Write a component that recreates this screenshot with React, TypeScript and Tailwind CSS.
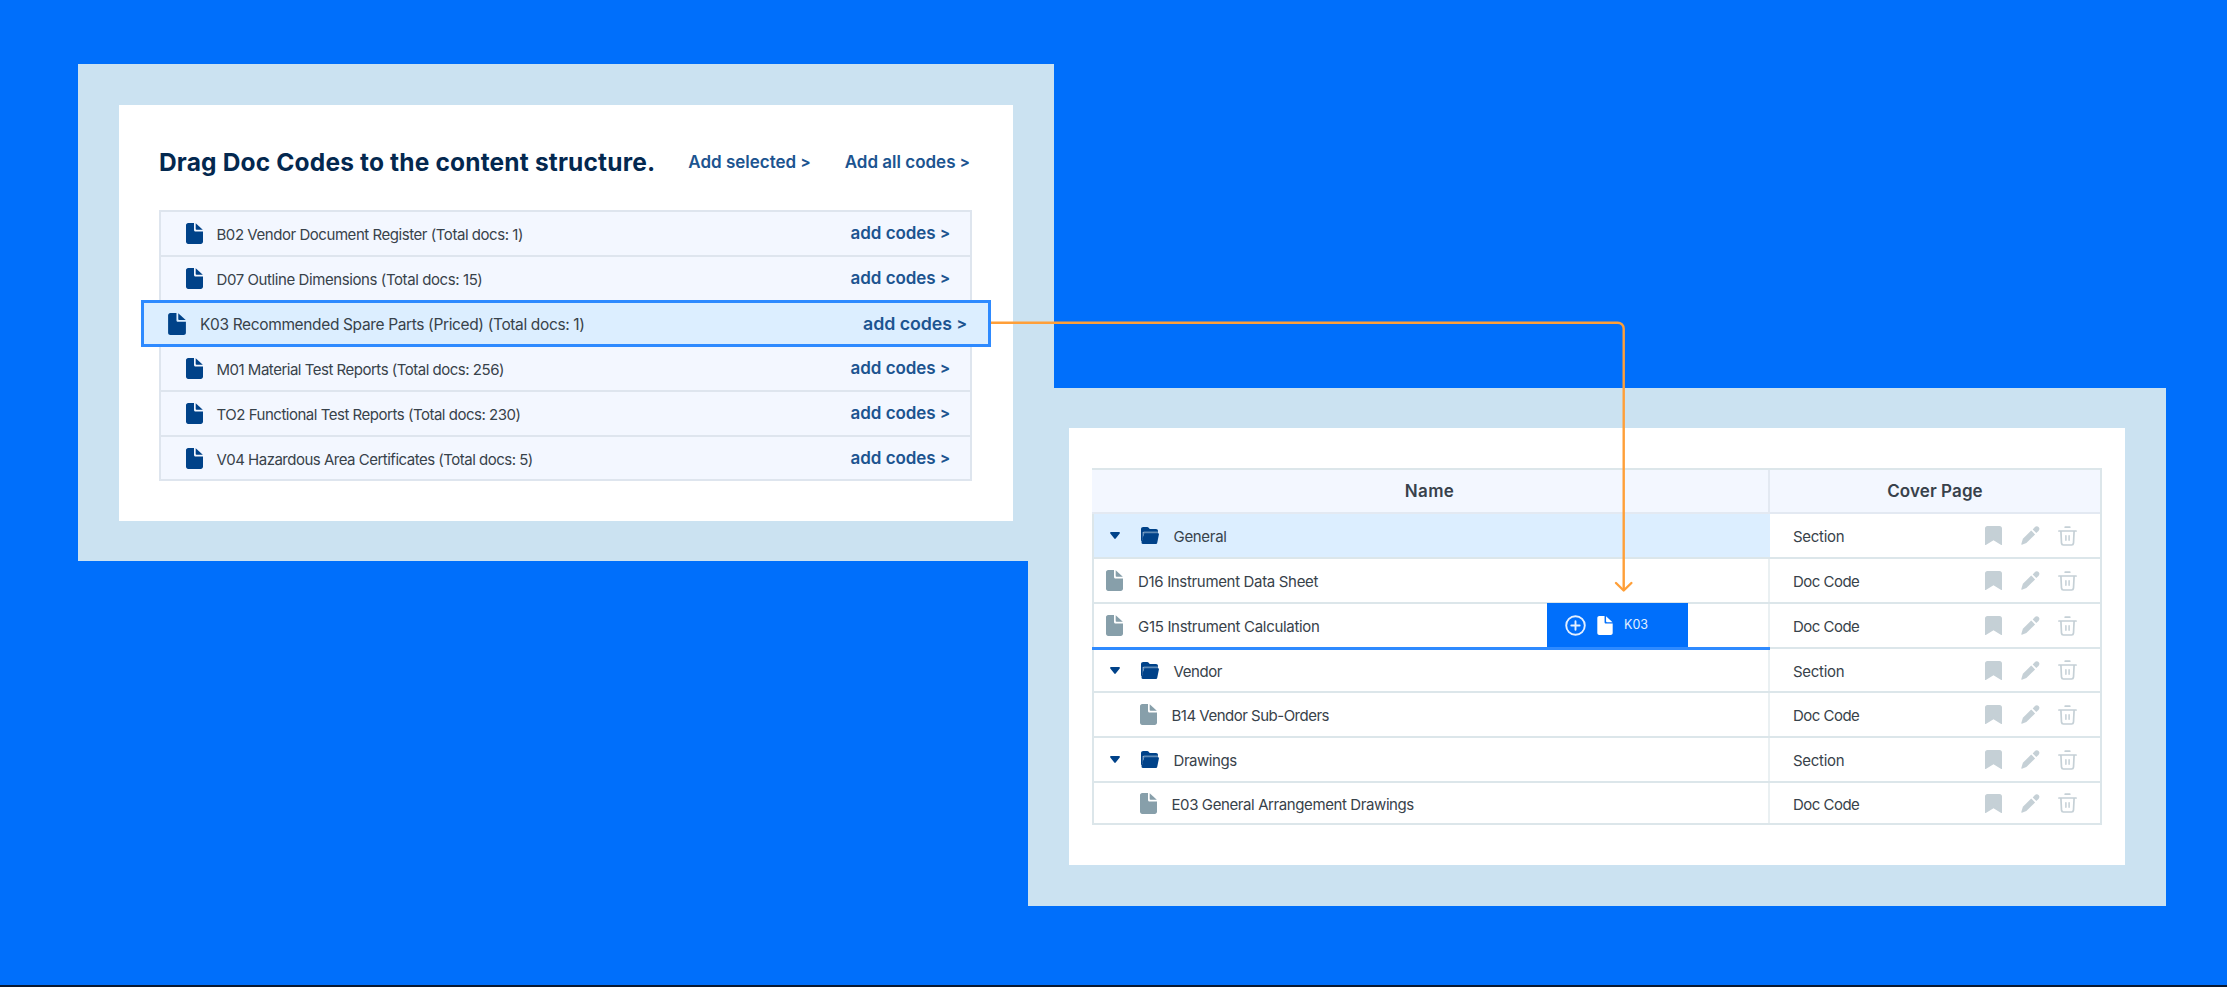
type IconProps = { className?: string };

const FileIcon = ({ className }: IconProps) => (
  <svg viewBox="0 0 17 21" fill="currentColor" className={className}>
    <path d="M2.2 0H8v6.9c0 .9.6 1.5 1.5 1.5H17v10.4c0 1.2-1 2.2-2.2 2.2H2.2C1 21 0 20 0 18.8V2.2C0 1 1 0 2.2 0Z" />
    <path d="M9.7 0.2 16.8 6.8H10.7c-.6 0-1-.4-1-1Z" />
  </svg>
);

const FolderIcon = ({ className }: IconProps) => (
  <svg viewBox="0 0 18 17" className={className}>
    <path fill="#004289" d="M0 2.2C0 .9.9 0 2.2 0h3.9c.7 0 1.2.3 1.6.8l1 1.3H15c1.2 0 2 .8 2 2v1H0Z" />
    <path fill="#5f8ab5" d="M2.6 4.6H17v3H1.8Z" />
    <path fill="#004289" d="M0 3.5h1.8V12L0 15Z" />
    <path fill="#004289" d="M4.2 6.2h12.6c.9 0 1.3.6 1.1 1.4l-1.6 7.8c-.2 1-.8 1.5-1.7 1.5H1.8C.8 16.9.3 16.1.6 15.2L2.7 7.3c.2-.7.7-1.1 1.5-1.1Z" />
  </svg>
);

const BookmarkIcon = ({ className }: IconProps) => (
  <svg viewBox="0 0 17 19" fill="currentColor" className={className}>
    <path d="M2.5 0h12C16 0 17 1 17 2.4V18.4c0 .5-.4.7-.8.5L8.5 14.2.8 18.9c-.4.2-.8 0-.8-.5V2.4C0 1 1 0 2.5 0Z" />
  </svg>
);

const PencilIcon = ({ className }: IconProps) => (
  <svg viewBox="0 0 19 19" fill="currentColor" className={className}>
    <path d="M10.2 4.5 14.1 8.4 5.4 17.1 0.9 18.7C.5 18.8.2 18.5.3 18.1L1.9 12.8Z" />
    <path d="M11.7 3.4 13.7 1.2c1.2-1.3 2.8-1.3 3.9-.2 1.1 1.1 1.1 2.7-.1 3.9L15.3 6.9Z" />
  </svg>
);

const TrashIcon = ({ className }: IconProps) => (
  <svg viewBox="0 0 19 20" fill="none" stroke="currentColor" strokeWidth="1.7" strokeLinecap="round" className={className}>
    <path d="M.9 5h17.2M7.2 1.2h4.6M2.9 5l.6 12.2c.1 1.1.8 1.8 1.9 1.8h8.2c1.1 0 1.8-.7 1.9-1.8L16.1 5" />
    <path strokeWidth="1.5" d="M7.9 9.8v4.4M11.1 9.8v4.4" />
  </svg>
);

const PlusCircleIcon = ({ className }: IconProps) => (
  <svg viewBox="0 0 21 21" fill="none" stroke="currentColor" strokeWidth="1.9" strokeLinecap="round" className={className}>
    <circle cx="10.5" cy="10.5" r="9.3" />
    <path d="M10.5 6.3v8.4M6.3 10.5h8.4" />
  </svg>
);

function ActionLink({ label, className = "" }: { label: string; className?: string }) {
  return (
    <span className={`font-semibold text-[#1c5490] ${className}`}>
      {label} <span className="align-[1px] text-[0.88em] font-bold">&gt;</span>
    </span>
  );
}

const docCodes = [
  { label: "B02 Vendor Document Register (Total docs: 1)", size: "h-[45px] tracking-[-0.45px]" },
  { label: "D07 Outline Dimensions (Total docs: 15)", size: "h-[45px] tracking-[-0.41px]" },
  { label: "K03 Recommended Spare Parts (Priced) (Total docs: 1)", size: "h-[47px] tracking-[-0.36px]", dragging: true },
  { label: "M01 Material Test Reports (Total docs: 256)", size: "h-[45px] tracking-[-0.49px]" },
  { label: "TO2 Functional Test Reports (Total docs: 230)", size: "h-[45px] tracking-[-0.48px]" },
  { label: "V04 Hazardous Area Certificates (Total docs: 5)", size: "h-[42px] tracking-[-0.5px]" },
];

const structure = [
  { name: "General", type: "Section", kind: "folder", size: "h-[45px]", tracking: "tracking-[-0.31px]", active: true },
  { name: "D16 Instrument Data Sheet", type: "Doc Code", kind: "file", size: "h-[45px]", tracking: "tracking-[-0.33px]" },
  { name: "G15 Instrument Calculation", type: "Doc Code", kind: "file", size: "h-[45px]", tracking: "tracking-[-0.31px]", dropTarget: true },
  { name: "Vendor", type: "Section", kind: "folder", size: "h-[44px]", tracking: "tracking-[-0.42px]" },
  { name: "B14 Vendor Sub-Orders", type: "Doc Code", kind: "nested", size: "h-[45px]", tracking: "tracking-[-0.5px]" },
  { name: "Drawings", type: "Section", kind: "folder", size: "h-[45px]", tracking: "tracking-[-0.45px]" },
  { name: "E03 General Arrangement Drawings", type: "Doc Code", kind: "nested", size: "h-[40px]", tracking: "tracking-[-0.4px]" },
];

function DocCodeList() {
  return (
    <div className="border-2 border-[#dee5ee] bg-[#f3f7ff]">
      {docCodes.map((d) =>
        d.dragging ? (
          <div
            key={d.label}
            className={`relative -mt-[2px] -mr-[21px] -ml-5 flex items-center border-[3px] border-[#2e8aff] bg-[#dceeff] pr-[21px] pl-6 text-[15.5px] ${d.size}`}
          >
            <FileIcon className="h-[22px] w-[18px] text-[#004289]" />
            <span className="ml-[14px] pt-[3px]">{d.label}</span>
            <ActionLink label="add codes" className="ml-auto text-[17.8px] tracking-[-0.05px]" />
          </div>
        ) : (
          <div
            key={d.label}
            className={`flex items-center border-b-2 border-[#dee5ee] pr-5 pl-[25px] last:border-b-0 ${d.size}`}
          >
            <FileIcon className="h-[21px] w-[17px] text-[#004289]" />
            <span className="ml-[13.5px] pt-[2px]">{d.label}</span>
            <ActionLink label="add codes" className="ml-auto text-[17px] tracking-[-0.05px]" />
          </div>
        )
      )}
    </div>
  );
}

function StructureTable() {
  return (
    <div className="border-2 border-l-0 border-[#dce6ea]">
      <div className="flex h-11 border-b-2 border-[#e3e9f2] bg-[#f3f7ff] text-[17px] font-semibold text-[#38414b]">
        <div className="flex w-[678px] items-center justify-center border-r-2 border-[#e3e9f2] pr-[1px] tracking-[0.37px]">Name</div>
        <div className="flex flex-1 items-center justify-center tracking-[0.1px]">Cover Page</div>
      </div>
      {structure.map((row) => (
        <div key={row.name} className={`flex border-b-2 border-[#dce6ea] last:border-b-0 ${row.size}`}>
          <div
            className={`relative flex w-[678px] items-center border-x-2 border-l-[#dce6ea] ${
              row.active ? "border-r-[#dceeff] bg-[#dceeff]" : "border-r-[#eaf0f2]"
            }`}
          >
            {row.kind === "folder" ? (
              <>
                <svg viewBox="0 0 10 7" className="ml-4 h-[7px] w-[10px]">
                  <path fill="#004289" d="M1 0h8c.8 0 1.2.8.7 1.4L5.7 6.6c-.4.5-1 .5-1.4 0L.3 1.4C-.2.8.2 0 1 0Z" />
                </svg>
                <FolderIcon className="ml-[20.5px] h-[17px] w-[18px]" />
              </>
            ) : (
              <FileIcon className={`h-[21px] w-[17px] text-[#879faa] ${row.kind === "nested" ? "ml-[45.5px]" : "ml-3"}`} />
            )}
            <span className={`ml-[15px] pt-[2px] ${row.tracking}`}>{row.name}</span>
            {row.dropTarget && (
              <>
                <div className="absolute -right-[2px] -bottom-[3px] -left-[2px] z-10 h-[3px] bg-[#2e8aff]" />
                <div className="absolute -top-px bottom-0 left-[453px] flex w-[141px] items-center bg-[#006ffb] pl-[18px] text-[12.5px] text-[#e3efff]">
                  <PlusCircleIcon className="h-[21px] w-[21px]" />
                  <FileIcon className="ml-[11px] h-[19px] w-4 text-white" />
                  <span className="ml-[11px] pt-px">K03</span>
                </div>
              </>
            )}
          </div>
          <div className="flex flex-1 items-center px-[23px] text-[#c5d0d6]">
            <span className={`pt-[2px] text-[#38424a] ${row.type === "Section" ? "tracking-[-0.29px]" : "tracking-[-0.52px]"}`}>
              {row.type}
            </span>
            <BookmarkIcon className="ml-auto h-[19px] w-[17px]" />
            <PencilIcon className="ml-[19px] h-[19px] w-[19px]" />
            <TrashIcon className="ml-[18px] h-5 w-[19px]" />
          </div>
        </div>
      ))}
    </div>
  );
}

export default function App() {
  return (
    <div className="relative h-[987px] w-[2227px] overflow-hidden border-b-2 border-[#0a1a33] bg-[#006ffb] pt-16 font-['Inter',sans-serif] text-[15px] leading-none whitespace-nowrap text-[#38424a]">
      {/* Doc codes panel */}
      <section className="ml-[78px] h-[497px] w-[976px] bg-[#cbe2f1] pt-[41px] pl-[41px]">
        <div className="h-[416px] w-[894px] bg-white pr-[41px] pl-10">
          <header className="flex h-[105px] items-center pt-[9px]">
            <h1 className="text-[24.5px] font-bold tracking-[0.17px] text-[#03284f]">Drag Doc Codes to the content structure.</h1>
            <ActionLink label="Add selected" className="ml-[33px] text-[17px]" />
            <ActionLink label="Add all codes" className="ml-[34px] text-[17px]" />
          </header>
          <DocCodeList />
        </div>
      </section>

      {/* Content structure panel */}
      <section className="-mt-[173px] ml-[1028px] h-[518px] w-[1138px] bg-[#cbe2f1] pt-10 pl-[41px]">
        <div className="h-[437px] w-[1056px] bg-white px-[23px] pt-10">
          <StructureTable />
        </div>
      </section>

      {/* Drag path from the list row to the drop target */}
      <svg className="pointer-events-none absolute top-0 left-0 h-[987px] w-[2227px]" fill="none" stroke="#ff9f38" strokeWidth="2.4">
        <path d="M991 322.7H1617.7a6 6 0 0 1 6 6V590" />
        <path strokeLinecap="round" strokeLinejoin="round" d="M1616 583l7.7 7.5 7.7-7.5" />
      </svg>
    </div>
  );
}
